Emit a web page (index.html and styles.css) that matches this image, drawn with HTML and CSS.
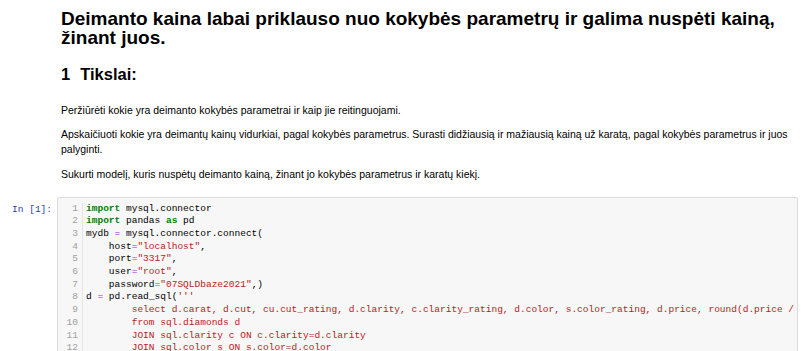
FILE: index.html
```html
<!DOCTYPE html>
<html lang="lt">
<head>
  <meta charset="UTF-8" />
  <title>Deimantų kainos</title>
  <link rel="stylesheet" href="styles.css">
</head>
<body>
  <div class="notebook">

    <div class="cell text-cell">
      <div class="prompt"></div>
      <div class="rendered">
        <h1>Deimanto kaina labai priklauso nuo kokybės parametrų ir galima nuspėti kainą, žinant juos.</h1>
        <h2><span class="toc-num">1</span>Tikslai:</h2>
        <p>Peržiūrėti kokie yra deimanto kokybės parametrai ir kaip jie reitinguojami.</p>
        <p>Apskaičiuoti kokie yra deimantų kainų vidurkiai, pagal kokybės parametrus. Surasti didžiausią ir mažiausią kainą už karatą, pagal kokybės parametrus ir juos palyginti.</p>
        <p>Sukurti modelį, kuris nuspėtų deimanto kainą, žinant jo kokybės parametrus ir karatų kiekį.</p>
      </div>
    </div>

    <div class="cell code-cell">
      <div class="prompt input-prompt">In [1]:</div>
      <div class="input-area">
        <div class="gutter">
          <div>1</div><div>2</div><div>3</div><div>4</div><div>5</div><div>6</div>
          <div>7</div><div>8</div><div>9</div><div>10</div><div>11</div><div>12</div>
        </div>
        <pre class="code"><span class="kw">import</span> mysql.connector
<span class="kw">import</span> pandas <span class="kw">as</span> pd
mydb <span class="op">=</span> mysql.connector.connect(
    host<span class="op">=</span><span class="str">"localhost"</span>,
    port<span class="op">=</span><span class="str">"3317"</span>,
    user<span class="op">=</span><span class="str">"root"</span>,
    password<span class="op">=</span><span class="str">"07SQLDbaze2021"</span>,)
d <span class="op">=</span> pd.read_sql(<span class="str">'''</span>
<span class="str">        select d.carat, d.cut, cu.cut_rating, d.clarity, c.clarity_rating, d.color, s.color_rating, d.price, round(d.price / d.carat, 2) as price_per_carat</span>
<span class="str">        from sql.diamonds d</span>
<span class="str">        JOIN sql.clarity c ON c.clarity=d.clarity</span>
<span class="str">        JOIN sql.color s ON s.color=d.color</span>
<span class="str">        JOIN sql.cut cu ON cu.cut=d.cut</span></pre>
      </div>
    </div>

  </div>
</body>
</html>
```

FILE: styles.css
```css
body {
  margin: 0;
  background: #ffffff;
  color: #000000;
  font-family: "Liberation Sans", Arial, sans-serif;
}

.notebook {
  width: 798px;
}

.cell {
  display: flex;
}

.prompt {
  width: 57px;
  flex-shrink: 0;
  box-sizing: border-box;
}

.rendered {
  flex: 1;
  padding-left: 4px;
  min-width: 0;
}

h1 {
  font-size: 19px;
  line-height: 19px;
  font-weight: bold;
  margin: 9px 0 0 0;
}

h2 {
  font-size: 16.5px;
  line-height: 1;
  font-weight: bold;
  margin: 19px 0 0 0;
}

.toc-num {
  margin-right: 10px;
}

.rendered p {
  font-size: 10.5px;
  line-height: 15px;
  color: #000000;
  margin: 20px 0 0 0;
}

.rendered p + p {
  margin-top: 9.5px;
}

.code-cell {
  margin-top: 15px;
}

.input-prompt {
  font-family: "Liberation Mono", monospace;
  font-size: 9.5px;
  color: #303f9f;
  text-align: right;
  padding-right: 5px;
  padding-top: 7px;
  line-height: 12.7px;
}

.input-area {
  flex: 1;
  display: flex;
  min-width: 0;
  overflow: hidden;
  background: #f7f7f7;
  border: 1px solid #dcdcdc;
  border-radius: 2px;
  padding: 5px 0 4px 0;
  font-family: "Liberation Mono", monospace;
  font-size: 9.53px;
  line-height: 12.7px;
}

.gutter {
  width: 20px;
  flex-shrink: 0;
  text-align: right;
  color: #a0a0a0;
  padding-right: 4px;
  border-right: 1px solid #e6e6e6;
}

.code {
  margin: 0;
  padding-left: 3px;
  font: inherit;
  color: #000000;
  white-space: pre;
}

.kw {
  color: #008000;
  font-weight: bold;
}

.op {
  color: #aa22ff;
}

.str {
  color: #ba2121;
}
```
